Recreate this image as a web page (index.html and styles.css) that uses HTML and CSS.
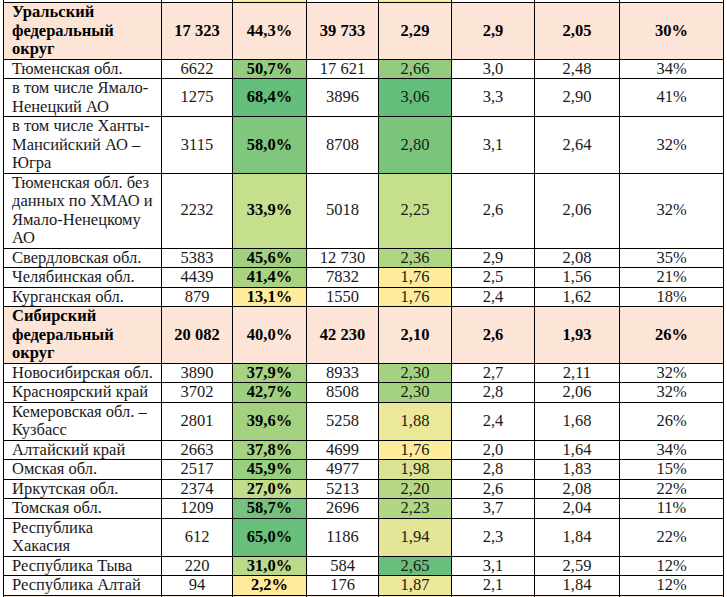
FILE: index.html
```html
<!DOCTYPE html>
<html lang="ru">
<head>
<meta charset="utf-8">
<link rel="stylesheet" href="styles.css">
</head>
<body>
<div class="wrap">
<table class="t">
<colgroup>
<col class="c1"><col class="c2"><col class="c3"><col class="c4"><col class="c5"><col class="c6"><col class="c7"><col class="c8">
</colgroup>
<tbody>
<tr class="sliver"><td></td><td></td><td class="yl"></td><td></td><td class="yl"></td><td></td><td></td><td></td></tr>
<tr class="dist"><td class="name">Уральский<br>федеральный<br>округ</td><td>17 323</td><td>44,3%</td><td>39 733</td><td>2,29</td><td>2,9</td><td>2,05</td><td>30%</td></tr>
<tr><td class="name">Тюменская обл.</td><td>6622</td><td class="b" style="background:#93cc7e">50,7%</td><td>17 621</td><td style="background:#93cc7e">2,66</td><td>3,0</td><td>2,48</td><td>34%</td></tr>
<tr><td class="name">в том числе Ямало-<br>Ненецкий АО</td><td>1275</td><td class="b" style="background:#63be7b">68,4%</td><td>3896</td><td style="background:#63be7b">3,06</td><td>3,3</td><td>2,90</td><td>41%</td></tr>
<tr><td class="name">в том числе Ханты-<br>Мансийский АО –<br>Югра</td><td>3115</td><td class="b" style="background:#80c67d">58,0%</td><td>8708</td><td style="background:#7bc47c">2,80</td><td>3,1</td><td>2,64</td><td>32%</td></tr>
<tr><td class="name">Тюменская обл. без<br>данных по ХМАО и<br>Ямало-Ненецкому<br>АО</td><td>2232</td><td class="b" style="background:#c6df8c">33,9%</td><td>5018</td><td style="background:#c6df8c">2,25</td><td>2,6</td><td>2,06</td><td>32%</td></tr>
<tr><td class="name">Свердловская обл.</td><td>5383</td><td class="b" style="background:#a0d080">45,6%</td><td>12 730</td><td style="background:#aed582">2,36</td><td>2,9</td><td>2,08</td><td>35%</td></tr>
<tr><td class="name">Челябинская обл.</td><td>4439</td><td class="b" style="background:#a9d381">41,4%</td><td>7832</td><td style="background:#ffeb9c">1,76</td><td>2,5</td><td>1,56</td><td>21%</td></tr>
<tr><td class="name">Курганская обл.</td><td>879</td><td class="b" style="background:#ffeb9c">13,1%</td><td>1550</td><td style="background:#ffeb9c">1,76</td><td>2,4</td><td>1,62</td><td>18%</td></tr>
<tr class="dist"><td class="name">Сибирский<br>федеральный<br>округ</td><td>20 082</td><td>40,0%</td><td>42 230</td><td>2,10</td><td>2,6</td><td>1,93</td><td>26%</td></tr>
<tr><td class="name">Новосибирская обл.</td><td>3890</td><td class="b" style="background:#a6d281">37,9%</td><td>8933</td><td style="background:#a5d281">2,30</td><td>2,7</td><td>2,11</td><td>32%</td></tr>
<tr><td class="name">Красноярский край</td><td>3702</td><td class="b" style="background:#9ecf7f">42,7%</td><td>8508</td><td style="background:#a5d281">2,30</td><td>2,8</td><td>2,06</td><td>32%</td></tr>
<tr><td class="name">Кемеровская обл. –<br>Кузбасс</td><td>2801</td><td class="b" style="background:#a3d180">39,6%</td><td>5258</td><td style="background:#ebe899">1,88</td><td>2,4</td><td>1,68</td><td>26%</td></tr>
<tr><td class="name">Алтайский край</td><td>2663</td><td class="b" style="background:#a6d281">37,8%</td><td>4699</td><td style="background:#ffeb9c">1,76</td><td>2,0</td><td>1,64</td><td>34%</td></tr>
<tr><td class="name">Омская обл.</td><td>2517</td><td class="b" style="background:#98ce7f">45,9%</td><td>4977</td><td style="background:#d9e393">1,98</td><td>2,8</td><td>1,83</td><td>15%</td></tr>
<tr><td class="name">Иркутская обл.</td><td>2374</td><td class="b" style="background:#c2dd8a">27,0%</td><td>5213</td><td style="background:#b6d886">2,20</td><td>2,6</td><td>2,08</td><td>22%</td></tr>
<tr><td class="name">Томская обл.</td><td>1209</td><td class="b" style="background:#74c27c">58,7%</td><td>2696</td><td style="background:#b2d784">2,23</td><td>3,7</td><td>2,04</td><td>11%</td></tr>
<tr><td class="name">Республика<br>Хакасия</td><td>612</td><td class="b" style="background:#67bf7b">65,0%</td><td>1186</td><td style="background:#e2e696">1,94</td><td>2,3</td><td>1,84</td><td>22%</td></tr>
<tr><td class="name">Республика Тыва</td><td>220</td><td class="b" style="background:#bada88">31,0%</td><td>584</td><td style="background:#68bf7b">2,65</td><td>3,1</td><td>2,59</td><td>12%</td></tr>
<tr><td class="name">Республика Алтай</td><td>94</td><td class="b" style="background:#ffeb9c">2,2%</td><td>176</td><td style="background:#ede99a">1,87</td><td>2,1</td><td>1,84</td><td>12%</td></tr>
<tr class="tail"><td></td><td></td><td></td><td></td><td></td><td></td><td></td><td></td></tr>
</tbody>
</table>
</div>
</body>
</html>
```
FILE: styles.css
```css
html, body {
  margin: 0;
  padding: 0;
  background: #ffffff;
  overflow: hidden;
}
.wrap {
  padding-left: 3px;
}
.t {
  border-collapse: collapse;
  table-layout: fixed;
  width: 720px;
  font-family: "Liberation Serif", "Times New Roman", serif;
  font-size: 16.5px;
  line-height: 18.5px;
  color: #1a1a1a;
}
.c1 { width: 158px; }
.c2 { width: 71px; }
.c3 { width: 74px; }
.c4 { width: 72px; }
.c5 { width: 73px; }
.c6 { width: 83px; }
.c7 { width: 85px; }
.c8 { width: 104px; }
.t td {
  border: 1px solid #000000;
  padding: 0 3px;
  text-align: center;
  vertical-align: middle;
  white-space: nowrap;
  overflow: hidden;
}
.t td.name {
  text-align: left;
  padding-left: 8px;
  padding-right: 1px;
}
.t td.b {
  font-weight: bold;
  color: #000000;
}
.sliver td {
  height: 2px;
  line-height: 0;
  font-size: 0;
  padding: 0;
  border-top: 0;
}
.sliver td.yl {
  background: #ffeb9c;
}
.dist td {
  background: #fce4d6;
  font-weight: bold;
  color: #000000;
}
.tail td {
  height: 40px;
  background: #fce4d6;
}
```
